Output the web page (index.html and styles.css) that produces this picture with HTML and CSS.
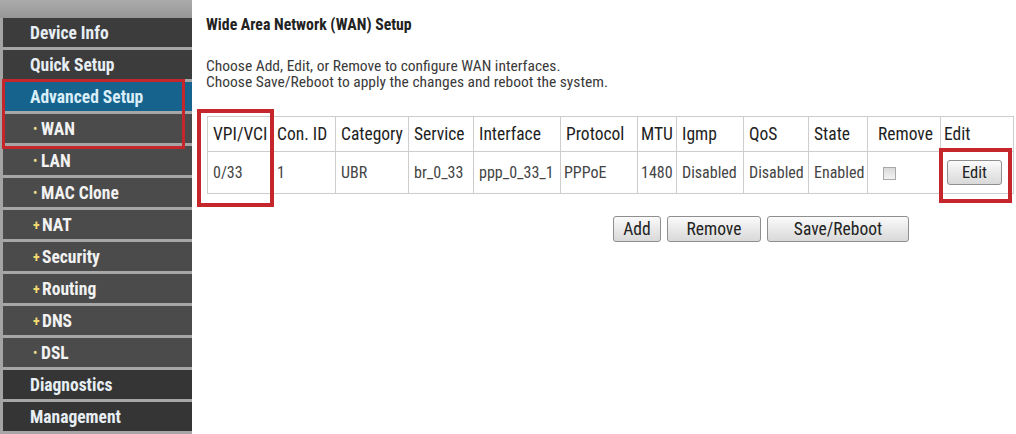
FILE: index.html
```html
<!DOCTYPE html>
<html>
<head>
<meta charset="utf-8">
<title>WAN Setup</title>
<link rel="stylesheet" href="styles.css">
</head>
<body>
<div class="page">
  <nav class="sidebar">
    <div class="band"></div>
    <div class="item main">Device Info</div>
    <div class="item main">Quick Setup</div>
    <div class="item active">Advanced Setup</div>
    <div class="item sub dot">WAN</div>
    <div class="item sub dot">LAN</div>
    <div class="item sub dot">MAC Clone</div>
    <div class="item sub plus">NAT</div>
    <div class="item sub plus">Security</div>
    <div class="item sub plus">Routing</div>
    <div class="item sub plus">DNS</div>
    <div class="item sub dot">DSL</div>
    <div class="item main dark">Diagnostics</div>
    <div class="item main dark">Management</div>
  </nav>
  <main class="content">
    <h1 class="title">Wide Area Network (WAN) Setup</h1>
    <p class="desc">Choose Add, Edit, or Remove to configure WAN interfaces.<br>Choose Save/Reboot to apply the changes and reboot the system.</p>
    <table class="wan">
      <colgroup>
        <col class="c-vpi"><col class="c-con"><col class="c-cat"><col class="c-svc"><col class="c-if"><col class="c-proto"><col class="c-mtu"><col class="c-igmp"><col class="c-qos"><col class="c-state"><col class="c-rm"><col class="c-edit">
      </colgroup>
      <thead>
        <tr>
          <th>VPI/VCI</th><th>Con. ID</th><th>Category</th><th>Service</th><th>Interface</th><th>Protocol</th><th class="tight">MTU</th><th>Igmp</th><th>QoS</th><th>State</th><th class="wide">Remove</th><th class="tight">Edit</th>
        </tr>
      </thead>
      <tbody>
        <tr>
          <td>0/33</td><td>1</td><td>UBR</td><td>br_0_33</td><td>ppp_0_33_1</td><td class="tight">PPPoE</td><td class="tight">1480</td><td>Disabled</td><td>Disabled</td><td>Enabled</td><td class="wide"><input type="checkbox" class="check"></td><td class="edit-cell"><button class="btn btn-edit">Edit</button></td>
        </tr>
      </tbody>
    </table>
    <div class="actions">
      <button class="btn btn-add">Add</button>
      <button class="btn btn-remove">Remove</button>
      <button class="btn btn-save">Save/Reboot</button>
    </div>
  </main>
  <div class="mark mark-menu"></div>
  <div class="mark mark-vpi"></div>
  <div class="mark mark-edit"></div>
</div>
</body>
</html>
```
FILE: styles.css
```css
html, body {
  margin: 0;
  padding: 0;
  background: #ffffff;
}

body {
  font-family: "Roboto Condensed", "Liberation Sans", sans-serif;
}

.page {
  position: relative;
  display: flex;
  width: 1016px;
  height: 434px;
  overflow: hidden;
}

/* ---------- sidebar ---------- */
.sidebar {
  width: 192px;
  flex: none;
  display: flex;
  flex-direction: column;
  background: #a4a4a4;
}

.band {
  height: 18px;
  background: linear-gradient(#ababab, #979797);
}

.item {
  height: 29px;
  margin-left: 3px;
  border-bottom: 3px solid #a6a6a6;
  display: flex;
  align-items: center;
  padding-left: 27px;
  font-size: 17.5px;
  font-weight: bold;
  color: #e7eef4;
  background: #3c3c3c;
  white-space: nowrap;
}

.item.dark {
  background: #353535;
}

.item.active {
  background: #16638d;
  color: #d9eef9;
}

.item.sub {
  background: #4b4b4b;
  color: #f2f2f2;
  padding-left: 30px;
}

.item.sub::before {
  display: inline-block;
  color: #e6dc8e;
  font-weight: bold;
}

.item.dot::before {
  content: "\2022";
  font-size: 12px;
  width: 8px;
}

.item.plus::before {
  content: "+";
  font-size: 14px;
  width: 9px;
  color: #f0d870;
}

/* ---------- content ---------- */
.content {
  flex: 1;
  padding: 15px 0 0 14px;
  color: #333;
}

.title {
  margin: 0;
  font-size: 15.8px;
  font-weight: bold;
  line-height: 19px;
  color: #222;
}

.desc {
  margin: 24px 0 0 0;
  font-size: 15.5px;
  line-height: 16px;
  color: #3a3a3a;
}

.wan {
  margin: 26px 0 0 1px;
  border-collapse: collapse;
  table-layout: fixed;
  width: 806px;
  border: 1px solid #c4c4c4;
}

.wan th,
.wan td {
  border: 1px solid #cdcdcd;
  padding: 0 0 0 5px;
  text-align: left;
  white-space: nowrap;
  overflow: hidden;
}

.wan th {
  height: 34px;
  font-size: 17.5px;
  font-weight: normal;
  color: #1e1e1e;
}

.wan td {
  height: 41px;
  font-size: 16px;
  color: #444;
}

.wan .tight { padding-left: 3px; }
.wan .wide { padding-left: 10px; }
.wan .edit-cell { padding-left: 6px; }

.c-vpi { width: 64px; }
.c-con { width: 64px; }
.c-cat { width: 73px; }
.c-svc { width: 65px; }
.c-if { width: 87px; }
.c-proto { width: 77px; }
.c-mtu { width: 39px; }
.c-igmp { width: 67px; }
.c-qos { width: 65px; }
.c-state { width: 59px; }
.c-rm { width: 73px; }
.c-edit { width: 73px; }

.check {
  appearance: none;
  -webkit-appearance: none;
  width: 13px;
  height: 13px;
  margin: 0 0 0 5px;
  vertical-align: middle;
  border: 1px solid #a9a9a9;
  background: linear-gradient(#d9d9d9, #f3f3f3);
  box-sizing: border-box;
}

.btn {
  font-family: "Roboto Condensed", "Liberation Sans", sans-serif;
  font-size: 17.5px;
  color: #222;
  height: 26px;
  padding: 0;
  border: 1px solid #8f8f8f;
  border-radius: 3px;
  background: linear-gradient(#fbfbfb, #e9e9e9 50%, #d9d9d9);
  box-sizing: border-box;
}

.btn-edit {
  width: 55px;
  height: 25px;
  font-size: 16.5px;
}

.actions {
  display: flex;
  gap: 6px;
  margin: 22px 0 0 407px;
}

.btn-add { width: 48px; }
.btn-remove { width: 94px; }
.btn-save { width: 142px; }

/* ---------- red annotation boxes ---------- */
.mark {
  position: absolute;
  box-sizing: border-box;
  border: 3px solid #c4262c;
}

.mark-menu {
  left: 2px;
  top: 79px;
  width: 183px;
  height: 70px;
}

.mark-vpi {
  left: 197px;
  top: 109px;
  width: 77px;
  height: 98px;
  border-width: 4px;
}

.mark-edit {
  left: 939px;
  top: 148px;
  width: 73px;
  height: 55px;
  border-width: 4px;
}
```
